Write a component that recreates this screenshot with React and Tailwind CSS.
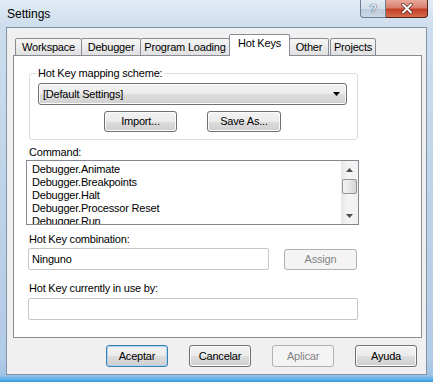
import React from "react";

const btn =
  "h-[21px] rounded-[3px] border border-[#707070] bg-[linear-gradient(180deg,#f2f2f2_0%,#ebebeb_50%,#dddddd_51%,#cfcfcf_100%)] shadow-[inset_0_0_0_1px_#fbfbfb] flex items-center justify-center text-black";
const btnDisabled =
  "h-[21px] rounded-[3px] border border-[#adb2b5] bg-[#f4f4f4] flex items-center justify-center text-[#838383]";

function Tab({ label, w, selected, extra = "" }) {
  if (selected) {
    return (
      <div
        className={`h-[22px] ${w} ${extra} bg-white border border-b-0 border-[#898c95] rounded-t-[2px] flex justify-center pt-[2px] leading-[13px]`}
      >
        {label}
      </div>
    );
  }
  return (
    <div
      className={`h-[18px] ${w} ${extra} border border-[#898c95] rounded-t-[2px] bg-[linear-gradient(180deg,#f6f6f6_0%,#ececec_50%,#e0e0e0_100%)] flex justify-center pt-[2px] leading-[13px]`}
    >
      {label}
    </div>
  );
}

export default function App() {
  return (
    <div className="w-[433px] h-[382px] overflow-hidden flex flex-col font-['Liberation_Sans',Arial,sans-serif] text-[11px] tracking-[-0.2px] text-black bg-[linear-gradient(180deg,#e2ecf6_0px,#cddded_27px,#bed3e9_200px,#b2cbe6_360px,#9fc3e6_375px,#4fb0ec_380px,#3a8fd0_382px)]">
      {/* Title bar */}
      <div className="h-[27px] flex items-start justify-between shrink-0">
        <div className="pl-[7px] pt-[7px] text-[12px] leading-[14px] tracking-normal text-black">Settings</div>
        <div className="flex mr-[5px]">
          <div className="w-[26px] h-[18px] border border-[#6c7f96] border-t-0 rounded-bl-[4px] bg-[linear-gradient(180deg,#e3ebf3_0%,#d3dfeb_50%,#bccbdc_51%,#c9d7e6_100%)] flex items-center justify-center">
            <span className="text-[13px] leading-[13px] font-bold text-[#e9eef4] [text-shadow:0_0_1px_#3b4c62,0_0_1px_#3b4c62]">?</span>
          </div>
          <div className="w-[42px] h-[18px] border border-[#5a2218] border-t-0 border-l-0 rounded-br-[4px] bg-[linear-gradient(180deg,#e9a99b_0%,#d8806d_45%,#c3412a_55%,#d46b4c_100%)] flex items-center justify-center">
            <svg width="14" height="11" viewBox="0 0 14 11">
              <path d="M3 1.5 L11 9.5 M11 1.5 L3 9.5" stroke="#5a2218" strokeWidth="3.4" strokeLinecap="round" />
              <path d="M3 1.5 L11 9.5 M11 1.5 L3 9.5" stroke="#ffffff" strokeWidth="2" strokeLinecap="round" />
            </svg>
          </div>
        </div>
      </div>

      {/* Client area */}
      <div className="ml-[6px] w-[421px] h-[348px] border border-[#7f92a8] bg-[#f0f0f0] flex flex-col pl-[6px] pt-[6px]">
        {/* Tabs */}
        <div className="flex items-end h-[22px] pl-[2px] -mb-px relative z-10">
          <Tab label="Workspace" w="w-[67px]" />
          <Tab label="Debugger" w="w-[60px]" extra="-ml-px" />
          <Tab label="Program Loading" w="w-[90px]" extra="-ml-px" />
          <Tab label="Hot Keys" w="w-[61px]" selected extra="-ml-px" />
          <Tab label="Other" w="w-[40px]" extra="-ml-px" />
          <Tab label="Projects" w="w-[46px]" extra="ml-px" />
        </div>

        {/* Panel */}
        <div className="w-[409px] h-[283px] bg-white border border-[#898c95] flex flex-col">
          <fieldset className="ml-[15px] mt-[11px] w-[329px] border border-[#d5dfe5] rounded-[3px] flex flex-col pb-[7px]">
            <legend className="ml-[6px] px-[2px] leading-[13px]">Hot Key mapping scheme:</legend>
            <div className="ml-[8px] mt-[3px] w-[309px] h-[22px] rounded-[3px] border border-[#707070] bg-[linear-gradient(180deg,#f2f2f2_0%,#ebebeb_50%,#dddddd_51%,#cfcfcf_100%)] shadow-[inset_0_0_0_1px_#fbfbfb] flex items-center justify-between pl-[4px] pr-[6px]">
              <span className="leading-[13px]">[Default Settings]</span>
              <svg width="7" height="4" viewBox="0 0 7 4">
                <path d="M0 0 H7 L3.5 4 Z" fill="#000" />
              </svg>
            </div>
            <div className="flex justify-center gap-[30px] mt-[6px] pr-[2px]">
              <div className={`${btn} w-[73px]`}>Import...</div>
              <div className={`${btn} w-[74px]`}>Save As...</div>
            </div>
          </fieldset>

          <div className="ml-[15px] mt-[6px] leading-[13px]">Command:</div>
          <div className="ml-[12px] mt-[1px] w-[333px] h-[65px] border border-[#828790] flex overflow-hidden">
            <div className="flex-1 pl-[5px] pt-[2px] leading-[13px] overflow-hidden">
              <div>Debugger.Animate</div>
              <div>Debugger.Breakpoints</div>
              <div>Debugger.Halt</div>
              <div>Debugger.Processor Reset</div>
              <div>Debugger.Run</div>
            </div>
            <div className="w-[17px] h-full bg-[linear-gradient(90deg,#e6e6e6_0%,#f4f4f4_40%,#f1f1f1_100%)] flex flex-col items-center">
              <div className="h-[17px] w-full flex items-center justify-center">
                <svg width="7" height="4" viewBox="0 0 7 4">
                  <path d="M0 4 H7 L3.5 0 Z" fill="#4d4d4d" />
                </svg>
              </div>
              <div className="w-[15px] h-[15px] mt-px rounded-[2px] border border-[#959595] bg-[linear-gradient(90deg,#f3f3f3_0%,#e6e6e6_50%,#d4d4d4_100%)]" />
              <div className="flex-1" />
              <div className="h-[17px] w-full flex items-center justify-center">
                <svg width="7" height="4" viewBox="0 0 7 4">
                  <path d="M0 0 H7 L3.5 4 Z" fill="#4d4d4d" />
                </svg>
              </div>
            </div>
          </div>

          <div className="ml-[15px] mt-[8px] leading-[13px]">Hot Key combination:</div>
          <div className="flex items-start mt-[2px]">
            <div className="ml-[14px] w-[241px] h-[22px] border border-[#c3c7cd] rounded-[2px] flex items-center pl-[3px] leading-[13px]">
              Ninguno
            </div>
            <div className={`${btnDisabled} ml-[15px] mt-px w-[73px]`}>Assign</div>
          </div>

          <div className="ml-[15px] mt-[12px] leading-[13px]">Hot Key currently in use by:</div>
          <div className="ml-[14px] mt-[3px] w-[330px] h-[22px] border border-[#c3c7cd] rounded-[2px]" />
        </div>

        {/* Bottom buttons */}
        <div className="flex justify-end gap-[21px] pr-[9px] mt-[7px]">
          <div className="w-[62px] h-[22px] rounded-[3px] border border-[#3c7fb1] bg-[linear-gradient(180deg,#f2f2f2_0%,#ebebeb_50%,#dddddd_51%,#cfcfcf_100%)] shadow-[inset_0_0_0_1px_#a6d6f2] flex items-center justify-center">
            Aceptar
          </div>
          <div className={`${btn} w-[62px] h-[22px]`}>Cancelar</div>
          <div className={`${btnDisabled} w-[62px] h-[22px]`}>Aplicar</div>
          <div className={`${btn} w-[62px] h-[22px]`}>Ayuda</div>
        </div>
      </div>
    </div>
  );
}
